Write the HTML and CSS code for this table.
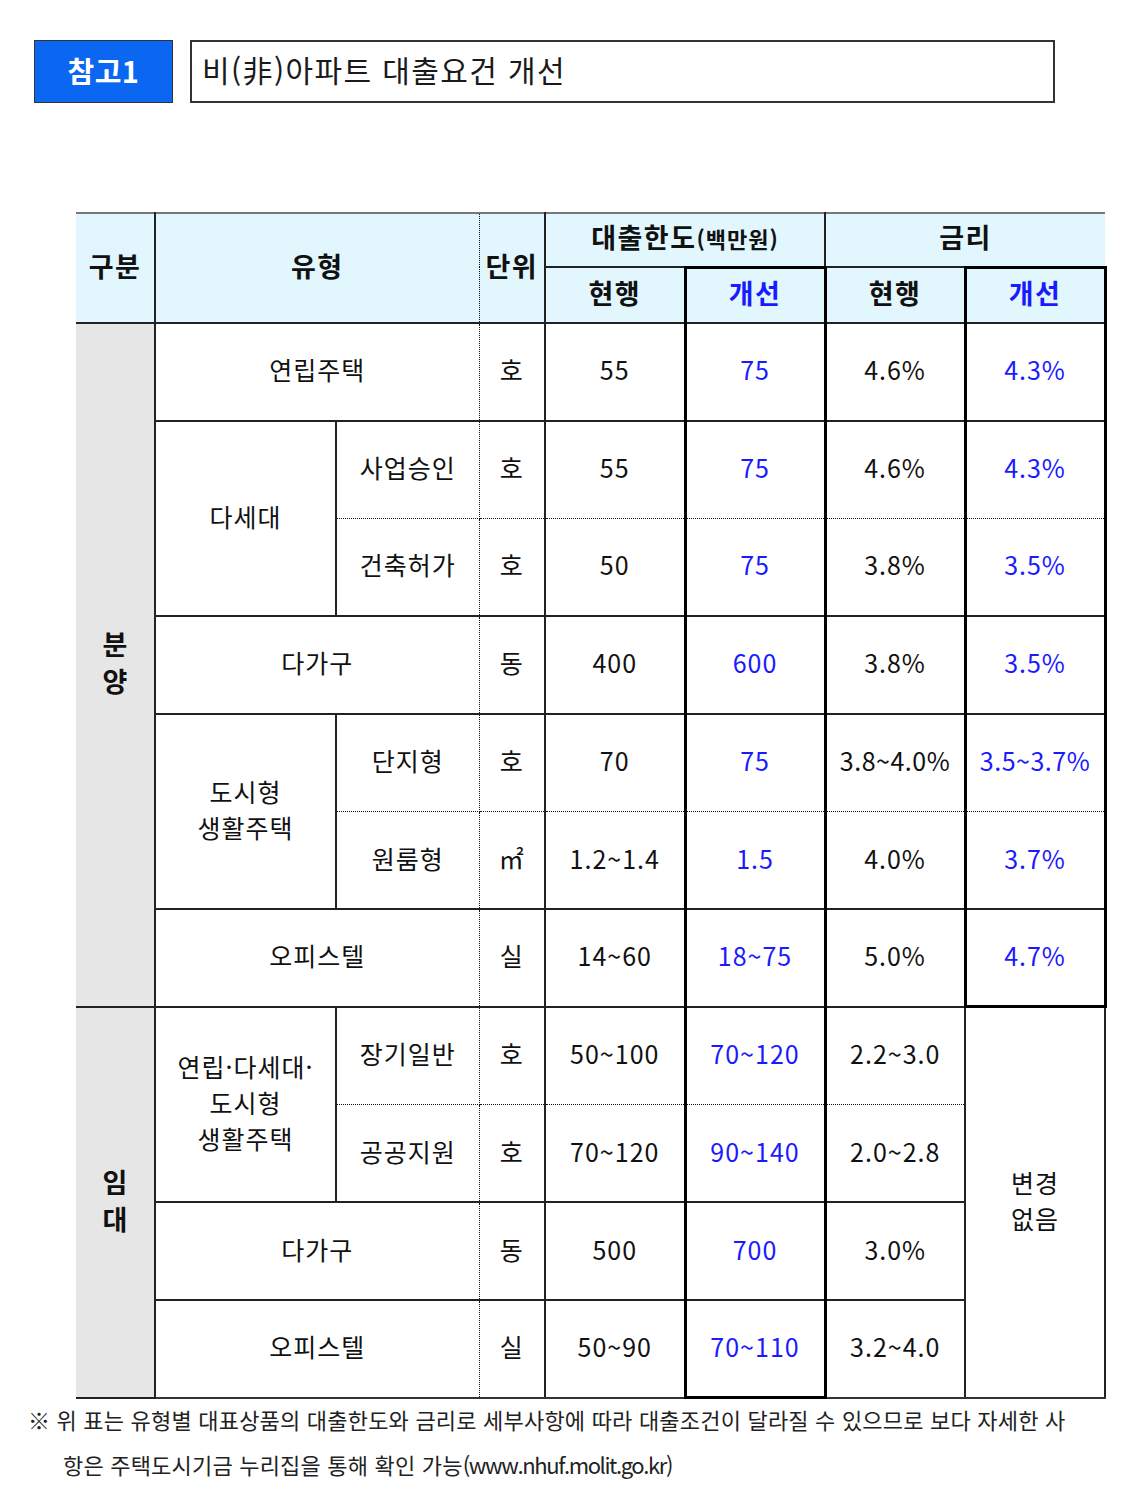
FILE: index.html
```html
<!DOCTYPE html>
<html lang="ko">
<head>
<meta charset="utf-8">
<title>비(非)아파트 대출요건 개선</title>
<link rel="stylesheet" href="styles.css">
</head>
<body>
<div class="top">
  <div class="badge">참고1</div>
  <div class="title">비(非)아파트 대출요건 개선</div>
</div>

<table class="loan">
  <colgroup>
    <col class="c1"><col class="c2"><col class="c3"><col class="c4">
    <col class="c5"><col class="c6"><col class="c7"><col class="c8">
  </colgroup>
  <thead>
    <tr class="h1">
      <th rowspan="2" class="nol">구분</th>
      <th rowspan="2" colspan="2" class="pre">유형</th>
      <th rowspan="2" class="u">단위</th>
      <th colspan="2">대출한도<span class="small">(백만원)</span></th>
      <th colspan="2" class="nor">금리</th>
    </tr>
    <tr class="h2">
      <th>현행</th>
      <th class="imp blue tt">개선</th>
      <th>현행</th>
      <th class="imp blue tt">개선</th>
    </tr>
  </thead>
  <tbody>
    <tr>
      <td rowspan="7" class="cat nol">분<br>양</td>
      <td colspan="2" class="pre">연립주택</td>
      <td class="u">호</td>
      <td>55</td>
      <td class="imp blue">75</td>
      <td>4.6%</td>
      <td class="imp blue">4.3%</td>
    </tr>
    <tr class="db">
      <td rowspan="2" class="keep">다세대</td>
      <td class="pre">사업승인</td>
      <td class="u">호</td>
      <td>55</td>
      <td class="imp blue">75</td>
      <td>4.6%</td>
      <td class="imp blue">4.3%</td>
    </tr>
    <tr class="dt">
      <td class="pre">건축허가</td>
      <td class="u">호</td>
      <td>50</td>
      <td class="imp blue">75</td>
      <td>3.8%</td>
      <td class="imp blue">3.5%</td>
    </tr>
    <tr>
      <td colspan="2" class="pre">다가구</td>
      <td class="u">동</td>
      <td>400</td>
      <td class="imp blue">600</td>
      <td>3.8%</td>
      <td class="imp blue">3.5%</td>
    </tr>
    <tr class="db">
      <td rowspan="2" class="keep">도시형<br>생활주택</td>
      <td class="pre">단지형</td>
      <td class="u">호</td>
      <td>70</td>
      <td class="imp blue">75</td>
      <td class="tight">3.8~4.0%</td>
      <td class="imp blue tight">3.5~3.7%</td>
    </tr>
    <tr class="dt">
      <td class="pre">원룸형</td>
      <td class="u">㎡</td>
      <td>1.2~1.4</td>
      <td class="imp blue">1.5</td>
      <td>4.0%</td>
      <td class="imp blue">3.7%</td>
    </tr>
    <tr>
      <td colspan="2" class="pre">오피스텔</td>
      <td class="u">실</td>
      <td>14~60</td>
      <td class="imp blue">18~75</td>
      <td>5.0%</td>
      <td class="imp blue tb">4.7%</td>
    </tr>
    <tr class="db">
      <td rowspan="4" class="cat nol">임<br>대</td>
      <td rowspan="2" class="keep">연립·다세대·<br>도시형<br>생활주택</td>
      <td class="pre">장기일반</td>
      <td class="u">호</td>
      <td>50~100</td>
      <td class="imp blue">70~120</td>
      <td>2.2~3.0</td>
      <td rowspan="4" class="keep nochg">변경<br>없음</td>
    </tr>
    <tr class="dt">
      <td class="pre">공공지원</td>
      <td class="u">호</td>
      <td>70~120</td>
      <td class="imp blue">90~140</td>
      <td>2.0~2.8</td>
    </tr>
    <tr>
      <td colspan="2" class="pre">다가구</td>
      <td class="u">동</td>
      <td>500</td>
      <td class="imp blue">700</td>
      <td>3.0%</td>
    </tr>
    <tr class="last">
      <td colspan="2" class="pre">오피스텔</td>
      <td class="u">실</td>
      <td>50~90</td>
      <td class="imp blue tb">70~110</td>
      <td>3.2~4.0</td>
    </tr>
  </tbody>
</table>

<p class="note">※ 위 표는 유형별 대표상품의 대출한도와 금리로 세부사항에 따라 대출조건이 달라질 수 있으므로 보다 자세한 사<br>항은 주택도시기금 누리집을 통해 확인 가능<span class="url">(www.nhuf.molit.go.kr)</span></p>
</body>
</html>
```

FILE: styles.css
```css
html, body {
  margin: 0;
  padding: 0;
  background: #fff;
}
body {
  font-family: "Noto Sans CJK KR", "Noto Sans", sans-serif;
  color: #111;
}

.top {
  display: flex;
  align-items: stretch;
  gap: 17px;
  padding: 40px 0 0 34px;
  height: 63px;
}
.badge {
  width: 139px;
  box-sizing: border-box;
  border: 1px solid #333;
  background: #0b66f2;
  color: #fff;
  font-weight: 700;
  font-size: 29px;
  letter-spacing: 0.5px;
  padding-bottom: 4px;
  display: flex;
  align-items: center;
  justify-content: center;
}
.title {
  width: 865px;
  box-sizing: border-box;
  border: 2px solid #333;
  font-size: 30px;
  letter-spacing: 1.4px;
  padding: 0 0 5px 10px;
  display: flex;
  align-items: center;
  color: #1a1a1a;
}

.loan {
  margin: 109px 0 0 76px;
  border-collapse: collapse;
  table-layout: fixed;
  width: 1029px;
}
.c1 { width: 79px; }
.c2 { width: 181px; }
.c3 { width: 143px; }
.c4 { width: 66px; }
.c5, .c6, .c7, .c8 { width: 140px; }

.loan th, .loan td {
  border: 2px solid #222;
  padding: 0 0 5px 0;
  text-align: center;
  vertical-align: middle;
  line-height: 36px;
}
.loan th {
  background: #e1f6fd;
  font-weight: 700;
  font-size: 27px;
  letter-spacing: 1.5px;
  color: #111;
}
.loan td {
  font-size: 25px;
  letter-spacing: 1px;
  font-weight: 400;
}
.loan td.tight { letter-spacing: 0.5px; }
.h1 { height: 54px; }
.h1 th { border-top: 2px solid #777; }
.h2 { height: 56px; }
.loan tbody tr { height: 97.7px; }

.small { font-size: 22px; letter-spacing: 1px; }

.nol { border-left: 0 none !important; }
.nor { border-right: 0 none !important; }

.loan td.cat {
  background: #e6e6e6;
  font-weight: 700;
  font-size: 27px;
  line-height: 37px;
  letter-spacing: 0;
}

/* dotted separators */
.loan .pre { border-right: 1px dotted #111; }
.loan .u { border-left: 1px dotted #111; }
.db td:not(.keep):not(.cat) { border-bottom: 1px dotted #111; }
.dt td:not(.keep):not(.cat) { border-top: 1px dotted #111; }

/* thick boxes */
.loan .imp {
  border-left: 3px solid #000;
  border-right: 3px solid #000;
}
.loan .tt { border-top: 3px solid #000; }
.loan .tb { border-bottom: 3px solid #000; }
.loan .nochg {
  border-left: 2px solid #222;
  border-right: 2px solid #222;
  border-bottom: 2px solid #333;
}
.last td { border-bottom: 2px solid #333; }
.last td.tb { border-bottom: 3px solid #000; }

.blue { color: #1a1aff !important; }

.note {
  margin: -2px 0 0 28px;
  font-size: 22px;
  letter-spacing: 0.2px;
  line-height: 45px;
  color: #222;
  padding-left: 35px;
  text-indent: -35px;
}
.url { letter-spacing: -1.4px; }
```
